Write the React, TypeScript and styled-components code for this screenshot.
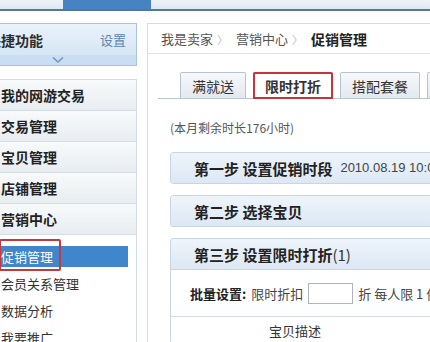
import React from 'react';
import styled, { createGlobalStyle } from 'styled-components';

const GlobalStyle = createGlobalStyle`
  html, body {
    margin: 0;
    padding: 0;
    background: #fff;
  }
  body {
    width: 430px;
    height: 342px;
    overflow: hidden;
    font-family: "Noto Sans CJK SC", "Liberation Sans", sans-serif;
    color: #333;
  }
`;

const TopStrip = styled.div`
  display: flex;
  height: 9px;
  background: linear-gradient(#eef3f8, #dfe8f0);
  border-bottom: 2px solid #50799a;
`;

const TopTab = styled.div`
  margin-left: 63px;
  width: 88px;
  background: #4783c2;
`;

const Layout = styled.div`
  display: flex;
  align-items: stretch;
  padding-top: 12px;
  height: 320px;
`;

const Sidebar = styled.aside`
  flex: 0 0 159px;
  margin-left: -22px;
  display: flex;
  flex-direction: column;
  gap: 13px;
`;

const QuickPanel = styled.div`
  border: 1px solid #aac3dc;
`;

const QuickHead = styled.div`
  display: flex;
  align-items: center;
  justify-content: space-between;
  height: 31px;
  padding: 0 10px 0 8px;
  background: linear-gradient(#eaf2fa, #d6e6f4);
`;

const QuickTitle = styled.span`
  font-size: 14px;
  font-weight: bold;
  color: #2d2d2d;
`;

const QuickSetting = styled.span`
  font-size: 13px;
  color: #5f86ab;
`;

const QuickFold = styled.div`
  display: flex;
  align-items: center;
  justify-content: center;
  height: 10px;
  background: #c9def2;
`;

const NavPanel = styled.div`
  flex: 1;
  border: 1px solid #d3dbe3;
  border-bottom: none;
  background: #fff;
`;

const NavRow = styled.div`
  display: flex;
  align-items: center;
  height: 30px;
  padding-left: 22px;
  border-bottom: 1px solid #d5dce3;
  background: linear-gradient(#f8fafb, #e8edf1);
  font-size: 14px;
  font-weight: bold;
  color: #222;
`;

const SubList = styled.div`
  padding-top: 11px;
`;

const SubItem = styled.div<{ $active?: boolean }>`
  position: relative;
  display: flex;
  align-items: center;
  height: 21px;
  margin: 0 8px 6px 0;
  padding-left: 22px;
  font-size: 13px;
  background: ${({ $active }) => ($active ? '#3f86cc' : 'transparent')};
  color: ${({ $active }) => ($active ? '#fff' : '#333')};
`;

const Marker = styled.span`
  position: absolute;
  left: 20px;
  top: -7px;
  bottom: -4px;
  width: 58px;
  border: 2px solid #c23a40;
  border-radius: 2px;
`;

const Main = styled.main`
  flex: 0 0 320px;
  margin-left: 10px;
  border: 1px solid #d3dbe3;
  border-right: none;
  border-bottom: none;
`;

const Breadcrumb = styled.div`
  display: flex;
  align-items: center;
  gap: 4px;
  height: 29px;
  padding-left: 13px;
  border-bottom: 1px solid #dde3e9;
  font-size: 13px;
  color: #555;
`;

const CrumbSep = styled.span`
  color: #bbb;
  font-size: 11px;
  margin-right: 4px;
`;

const CrumbCurrent = styled.span`
  font-size: 14px;
  font-weight: bold;
  color: #222;
`;

const Content = styled.div`
  padding: 18px 0 0 22px;
`;

const TabBar = styled.div`
  display: flex;
  align-items: flex-end;
  gap: 7px;
  margin-left: -12px;
  padding-left: 22px;
  border-bottom: 1px solid #b9c6d2;
`;

const Tab = styled.div<{ $active?: boolean }>`
  display: flex;
  align-items: center;
  flex-shrink: 0;
  height: 25px;
  padding: 0 11px;
  border: 1px solid #b6c5d3;
  border-bottom: none;
  border-radius: 2px 2px 0 0;
  background: ${({ $active }) => ($active ? '#fff' : 'linear-gradient(#f7f9fb, #e2e8ee)')};
  font-size: 14px;
  font-weight: ${({ $active }) => ($active ? 'bold' : 'normal')};
  color: #333;
  margin-bottom: ${({ $active }) => ($active ? '-1px' : '0')};
  padding-bottom: ${({ $active }) => ($active ? '1px' : '0')};
  outline: ${({ $active }) => ($active ? '2px solid #c7353b' : 'none')};
  outline-offset: -2px;
`;

const Note = styled.div`
  margin-top: 21px;
  font-size: 12px;
  line-height: 16px;
  color: #555;
`;

const StepList = styled.div`
  display: flex;
  flex-direction: column;
  gap: 11px;
  margin-top: 16px;
`;

const StepBox = styled.section`
  border: 1px solid #c8d6e4;
  border-right: none;
  border-radius: 4px 0 0 4px;
  overflow: hidden;
`;

const StepHead = styled.div<{ $divided?: boolean }>`
  display: flex;
  align-items: center;
  gap: 8px;
  height: 30px;
  padding-left: 23px;
  background: linear-gradient(#eef4fa, #dde8f4);
  border-bottom: ${({ $divided }) => ($divided ? '1px solid #c8d6e4' : 'none')};
  white-space: nowrap;
`;

const StepTitle = styled.span`
  font-size: 15px;
  font-weight: bold;
  color: #222;
`;

const StepCount = styled.span`
  margin-left: -8px;
  font-size: 15px;
  color: #333;
`;

const StepDate = styled.span`
  font-family: "Liberation Sans", sans-serif;
  font-size: 13px;
  color: #444;
`;

const BatchRow = styled.div`
  display: flex;
  align-items: center;
  gap: 5px;
  height: 46px;
  padding-left: 19px;
  border-bottom: 1px solid #d5dde5;
  font-size: 13px;
  color: #444;
  white-space: nowrap;
`;

const BatchLabel = styled.span`
  font-weight: bold;
  color: #222;
`;

const SmallInput = styled.input`
  width: 45px;
  height: 21px;
  box-sizing: border-box;
  border: 1px solid #a9b5c1;
  background: #fff;
`;

const TableHead = styled.div`
  display: flex;
  height: 26px;
  align-items: center;
`;

const HeadCell = styled.div`
  width: 248px;
  text-align: center;
  font-size: 13px;
  color: #333;
`;

const Chevron = () => (
  <svg width="12" height="6" viewBox="0 0 12 6">
    <polyline points="1,0.5 6,5 11,0.5" fill="none" stroke="#6e95bb" strokeWidth="1.5" />
  </svg>
);

const navRows = ['我的网游交易', '交易管理', '宝贝管理', '店铺管理', '营销中心'];
const subItems = ['促销管理', '会员关系管理', '数据分析', '我要推广'];
const tabs = ['满就送', '限时打折', '搭配套餐', '店铺优惠券'];

export default function App() {
  return (
    <>
      <GlobalStyle />
      <TopStrip>
        <TopTab />
      </TopStrip>
      <Layout>
        <Sidebar>
          <QuickPanel>
            <QuickHead>
              <QuickTitle>快捷功能</QuickTitle>
              <QuickSetting>设置</QuickSetting>
            </QuickHead>
            <QuickFold>
              <Chevron />
            </QuickFold>
          </QuickPanel>
          <NavPanel>
            {navRows.map((r) => (
              <NavRow key={r}>{r}</NavRow>
            ))}
            <SubList>
              {subItems.map((s, i) => (
                <SubItem key={s} $active={i === 0}>
                  {s}
                  {i === 0 && <Marker />}
                </SubItem>
              ))}
            </SubList>
          </NavPanel>
        </Sidebar>
        <Main>
          <Breadcrumb>
            <span>我是卖家</span>
            <CrumbSep>〉</CrumbSep>
            <span>营销中心</span>
            <CrumbSep>〉</CrumbSep>
            <CrumbCurrent>促销管理</CrumbCurrent>
          </Breadcrumb>
          <Content>
            <TabBar>
              {tabs.map((t, i) => (
                <Tab key={t} $active={i === 1}>{t}</Tab>
              ))}
            </TabBar>
            <Note>(本月剩余时长176小时)</Note>
            <StepList>
              <StepBox>
                <StepHead>
                  <StepTitle>第一步 设置促销时段</StepTitle>
                  <StepDate>2010.08.19 10:00 至 2010.08.21 10:00</StepDate>
                </StepHead>
              </StepBox>
              <StepBox>
                <StepHead>
                  <StepTitle>第二步 选择宝贝</StepTitle>
                </StepHead>
              </StepBox>
              <StepBox>
                <StepHead $divided>
                  <StepTitle>第三步 设置限时打折</StepTitle>
                  <StepCount>(1)</StepCount>
                </StepHead>
                <BatchRow>
                  <BatchLabel>批量设置:</BatchLabel>
                  <span>限时折扣</span>
                  <SmallInput />
                  <span>折 每人限 1 件</span>
                </BatchRow>
                <TableHead>
                  <HeadCell>宝贝描述</HeadCell>
                </TableHead>
              </StepBox>
            </StepList>
          </Content>
        </Main>
      </Layout>
    </>
  );
}
